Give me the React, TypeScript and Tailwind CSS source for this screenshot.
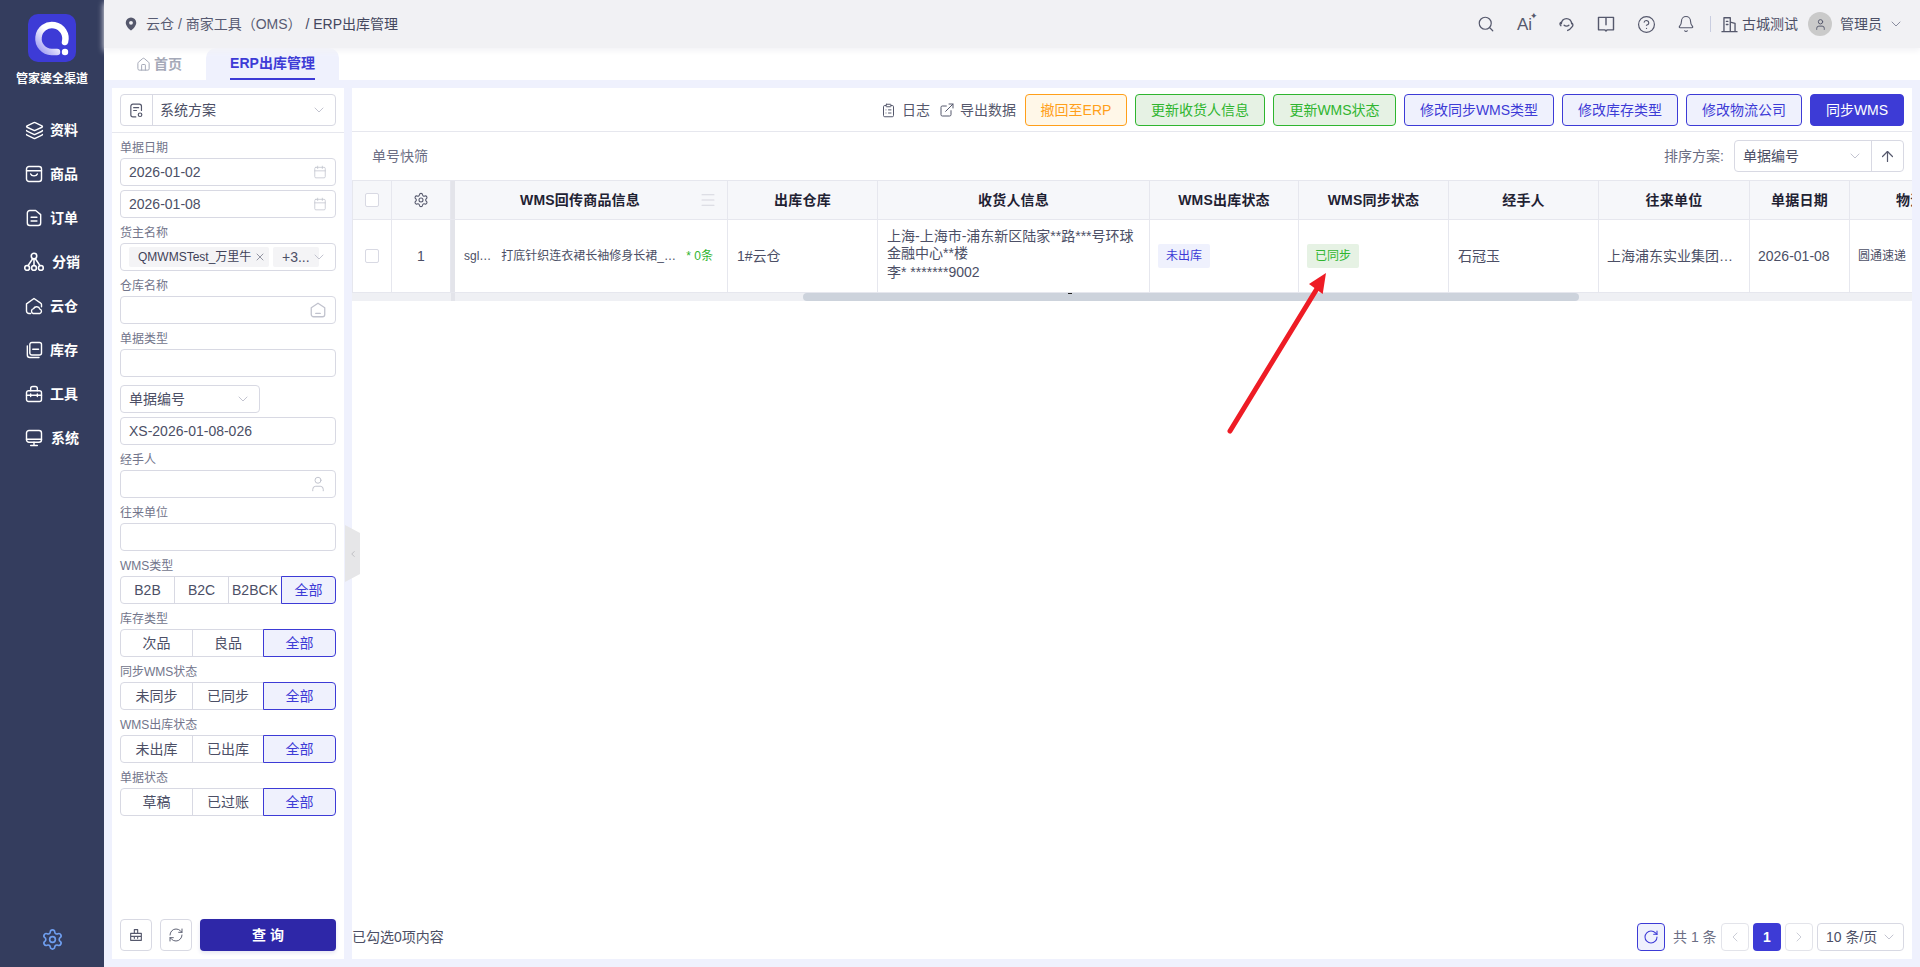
import React from "react";
import { Search, CircleHelp, Bell, ChevronDown, ChevronLeft, ChevronRight, ArrowUp, RotateCw, RefreshCw, Settings, User, Calendar, X, Menu, Home, Layers, ExternalLink, ClipboardList } from "lucide-react";

type IP = { className?: string; children?: React.ReactNode };
const S = ({ className, children }: IP) => (
  <svg viewBox="0 0 24 24" fill="none" stroke="currentColor" strokeWidth={1.7} strokeLinecap="round" strokeLinejoin="round" className={className}>
    {children}
  </svg>
);

const Logo = () => (
  <svg viewBox="0 0 48 48" className="w-12 h-12">
    <defs>
      <linearGradient id="q" x1="0" y1="1" x2="1" y2="0">
        <stop offset="0" stopColor="#9a97f2" />
        <stop offset="0.55" stopColor="#ffffff" />
        <stop offset="1" stopColor="#ffffff" />
      </linearGradient>
    </defs>
    <rect width="48" height="48" rx="10" fill="#3d3bd6" />
    <path d="M37 28 A13.500 13.500 0 1 0 23.500 38 L29 38" fill="none" stroke="url(#q)" strokeWidth="6.500" strokeLinecap="round" />
    <circle cx="37" cy="38" r="3.200" fill="#fff" />
  </svg>
);

const IcoGoods = ({ className }: IP) => (
  <S className={className}>
    <rect x="3" y="3" width="18" height="18" rx="3" />
    <path d="M3 8h18M8 12c1 3 7 3 8 0" />
  </S>
);
const IcoOrder = ({ className }: IP) => (
  <S className={className}>
    <path d="M7 3h7l6 5v10a3 3 0 0 1-3 3H7a3 3 0 0 1-3-3V6a3 3 0 0 1 3-3z" />
    <path d="M8.500 11h7M8.500 15.500h7" />
  </S>
);
const IcoNet = ({ className }: IP) => (
  <S className={className}>
    <circle cx="12" cy="5.500" r="3" />
    <circle cx="4.500" cy="18.500" r="2.600" />
    <circle cx="12" cy="18.500" r="2.600" />
    <circle cx="19.500" cy="18.500" r="2.600" />
    <path d="M10.500 8.500 5.500 16M12 8.500V16M13.500 8.500l5 7.500" />
  </S>
);
const IcoCloud = ({ className }: IP) => (
  <S className={className}>
    <path d="M8 21H6a3 3 0 0 1-3-3V9.500L12 3l8 5.500a2 2 0 0 1 1 2V13" />
    <path d="M11 21a3 3 0 0 1 .5-5.800 4 4 0 0 1 7.500.6A2.700 2.700 0 0 1 19 21z" />
  </S>
);
const IcoStock = ({ className }: IP) => (
  <S className={className}>
    <rect x="7" y="3" width="14" height="15" rx="2.500" />
    <path d="M4 7v11a3 3 0 0 0 3 3h11M10.500 11h7" />
  </S>
);
const IcoTool = ({ className }: IP) => (
  <S className={className}>
    <rect x="3" y="8" width="18" height="13" rx="2.500" />
    <path d="M8 8V5.500A2.500 2.500 0 0 1 10.500 3h3A2.500 2.500 0 0 1 16 5.500V8M3 13.500h18M8 12v3M16 12v3" />
  </S>
);
const IcoMon = ({ className }: IP) => (
  <S className={className}>
    <rect x="3" y="3" width="18" height="14" rx="3" />
    <path d="M3 13.500h18M12 17v3.500M8 21h8" />
  </S>
);

const menus: { label: string; icon: React.ReactNode; txt: string }[] = [
  { label: "资料", icon: <Layers className="w-[19px] h-[19px] shrink-0" strokeWidth={1.8} />, txt: "ml-[8px]" },
  { label: "商品", icon: <IcoGoods className="w-[20px] h-[20px] shrink-0" />, txt: "ml-[8px]" },
  { label: "订单", icon: <IcoOrder className="w-[20px] h-[20px] shrink-0" />, txt: "ml-[8px]" },
  { label: "分销", icon: <IcoNet className="w-[22px] h-[22px] shrink-0" />, txt: "ml-[10px]" },
  { label: "云仓", icon: <IcoCloud className="w-[20px] h-[20px] shrink-0" />, txt: "ml-[8px]" },
  { label: "库存", icon: <IcoStock className="w-[20px] h-[20px] shrink-0" />, txt: "ml-[8px]" },
  { label: "工具", icon: <IcoTool className="w-[20px] h-[20px] shrink-0" />, txt: "ml-[8px]" },
  { label: "系统", icon: <IcoMon className="w-[20px] h-[20px] shrink-0" />, txt: "ml-[9px]" },
];

const Sidebar = () => (
  <aside className="w-[104px] shrink-0 bg-[#343d5e] flex flex-col items-center pt-[14px] pb-[16px] text-white">
    <Logo />
    <div className="mt-[9px] text-[12px] leading-[16px] font-bold text-white">管家婆全渠道</div>
    <nav className="mt-[21px] w-full flex flex-col">
      {menus.map((m) => (
        <div key={m.label} className="h-11 flex items-center pl-[26px]">
          <span className="w-[16px] flex justify-center">{m.icon}</span>
          <span className={`${m.txt} text-[14px] font-bold`}>{m.label}</span>
        </div>
      ))}
    </nav>
    <Settings className="mt-auto w-[23px] h-[23px] text-[#6f9ff0]" strokeWidth={1.7} />
  </aside>
);

const HCell = ({ children }: IP) => <span className="w-10 flex items-center justify-center">{children}</span>;

const TopBar = () => (
  <header className="relative z-10 h-12 shrink-0 bg-[#f1f1f4] shadow-[0_3px_6px_#f3f3f6] flex items-center pl-[20px] pr-[16px] text-[#4c4f66]">
    <svg viewBox="0 0 16 16" className="w-[14px] h-[14px] text-[#55586c]">
      <path fillRule="evenodd" fill="currentColor" d="M8 0.5a6 6 0 0 1 6 6c0 3.600-4 7.500-6 9-2-1.500-6-5.400-6-9a6 6 0 0 1 6-6zm0 4a2.200 2.200 0 1 0 0 4.400a2.200 2.200 0 0 0 0-4.400z" />
    </svg>
    <span className="ml-[8px] text-[14px] whitespace-pre text-[#585b72]">云仓 / 商家工具（OMS） <span className="text-[#44475e]">/ ERP出库管理</span></span>
    <div className="ml-auto flex items-center text-[#55586c]">
      <HCell><Search className="w-[18px] h-[18px]" strokeWidth={1.6} /></HCell>
      <HCell>
        <span className="relative text-[17px] leading-none font-medium w-[18px]">
          Ai<span className="absolute -top-[4px] left-[13px] text-[9px]">✦</span>
        </span>
      </HCell>
      <HCell>
        <S className="w-[19px] h-[19px]">
          <path d="M5.500 11a6.500 6.500 0 0 1 13 0M5.500 9C3.500 9.500 3 12 5 13.500M18.500 10c2 1 2 3.500.5 5-1.500 2-3 3.500-5.500 4.500" />
          <path d="M9 13c1.500 1.500 4.500 1.500 6 0" />
        </S>
      </HCell>
      <HCell>
        <S className="w-[20px] h-[20px]">
          <path d="M3 4h18v15h-7.500L12 20.500 10.500 19H3zM12 4v9" />
        </S>
      </HCell>
      <HCell><CircleHelp className="w-[19px] h-[19px]" strokeWidth={1.5} /></HCell>
      <HCell><Bell className="w-[18px] h-[18px]" strokeWidth={1.5} /></HCell>
      <span className="ml-[4px] h-4 w-px bg-[#c9cde0]" />
      <S className="ml-[9px] w-[19px] h-[19px]">
        <path d="M5 21V3.500h8V21M13 9l6 1.500V21M2.500 21h19M8 8h2M8 12h2" />
      </S>
      <span className="ml-[3px] text-[14px] text-[#4c4f66]">古城测试</span>
      <span className="ml-[10px] w-6 h-6 rounded-full bg-[#cacaca] flex items-center justify-center text-[#55586c]">
        <User className="w-[13px] h-[13px]" strokeWidth={1.8} />
      </span>
      <span className="ml-[8px] text-[14px] text-[#4c4f66]">管理员</span>
      <ChevronDown className="ml-[6px] w-4 h-4 text-[#8a8da0]" strokeWidth={1.5} />
    </div>
  </header>
);

const Tabs = () => (
  <div className="h-8 shrink-0 bg-white flex items-end">
    <div className="w-[102px] h-8 flex items-center pl-[32px] text-[#a5a9b8] text-[14px] font-bold">
      <Home className="w-[15px] h-[15px] mr-[3px]" strokeWidth={1.6} />
      首页
    </div>
    <div className="w-[133px] h-8 rounded-t-[10px] bg-[#eff1fd] flex justify-center">
      <div className="h-8 w-[85px] border-b-2 border-[#3d3bd6] text-[14px] font-bold text-[#3d3bd6] leading-[30px] text-center whitespace-nowrap">ERP出库管理</div>
    </div>
  </div>
);

const box = "h-7 rounded-[4px] border border-[#d8d9e3] bg-white flex items-center text-[14px] text-[#4c4f66]";

const Label = ({ children }: IP) => (
  <div className="h-[25px] pt-[4px] flex items-center text-[12px] text-[#72758b]">{children}</div>
);

const Field = ({ label, value, icon }: { label?: string; value?: string; icon?: React.ReactNode }) => (
  <>
    {label && <Label>{label}</Label>}
    <div className={`${box} pl-[8px] pr-[8px] justify-between`}>
      <span>{value}</span>
      {icon}
    </div>
  </>
);

const Seg = ({ label, items, wide }: { label: string; items: string[]; wide?: boolean }) => (
  <>
    <Label>{label}</Label>
    <div className="h-7 flex text-[14px] text-[#4c4f66]">
      {items.map((t, i) => (
        <div
          key={t}
          className={`${wide ? (i === 2 ? "w-[54px]" : "w-[55px]") : i === 0 ? "w-[73px]" : "w-[72px]"} border border-[#d8d9e3] -mr-px flex items-center justify-center whitespace-nowrap ${i === 0 ? "rounded-l-[4px]" : ""}`}
        >
          {t}
        </div>
      ))}
      <div className={`${wide ? "w-[55px]" : "w-[73px]"} relative border border-[#3d3bd6] rounded-r-[4px] bg-[#eff1fd] text-[#3d3bd6] flex items-center justify-center`}>全部</div>
    </div>
  </>
);

const Left = () => (
  <section className="w-[232px] shrink-0 bg-white flex flex-col">
    <div className="h-[45px] border-b border-[#e6e7ee] px-2 pt-[6px] shrink-0">
      <div className="h-8 rounded-[4px] border border-[#d8d9e3] flex items-center text-[14px] text-[#4c4f66]">
        <span className="w-8 h-full border-r border-[#d8d9e3] flex items-center justify-center text-[#55586c]">
          <S className="w-[17px] h-[17px]">
            <path d="M11 21H7a3 3 0 0 1-3-3V6a3 3 0 0 1 3-3h9a3 3 0 0 1 3 3v6M8 8h7M8 12h4" />
            <circle cx="17" cy="18" r="2.500" />
          </S>
        </span>
        <span className="ml-[7px]">系统方案</span>
        <ChevronDown className="ml-auto mr-[8px] w-4 h-4 text-[#b9bbc8]" strokeWidth={1.3} />
      </div>
    </div>
    <div className="flex-1 flex flex-col px-2 pb-2">
      <Field label="单据日期" value="2026-01-02" icon={<Calendar className="w-[14px] h-[14px] text-[#c0c2cd]" strokeWidth={1.3} />} />
      <div className="h-1 shrink-0" />
      <Field value="2026-01-08" icon={<Calendar className="w-[14px] h-[14px] text-[#c0c2cd]" strokeWidth={1.3} />} />
      <Label>货主名称</Label>
      <div className={`${box} pl-[8px] relative`}>
        <span className="w-[140px] h-5 pl-[9px] bg-[#f4f4f6] rounded-[2px] text-[12px] flex items-center whitespace-nowrap text-[#3f4258]">
          QMWMSTest_万里牛
          <X className="ml-[3px] w-[12px] h-[12px] text-[#6a6d80]" strokeWidth={1.4} />
        </span>
        <span className="ml-[4px] h-5 w-[46px] pl-[9px] bg-[#f4f4f6] rounded-[2px] text-[14px] flex items-center">+3...</span>
        <ChevronDown className="absolute right-[8px] top-[5px] w-4 h-4 text-[#b9bbc8]" strokeWidth={1.3} />
      </div>
      <Field
        label="仓库名称"
        icon={
          <S className="w-[18px] h-[18px] text-[#c0c2cd]">
            <path d="M3 9l9-6 9 6v9a3 3 0 0 1-3 3H6a3 3 0 0 1-3-3zM9 16.500h6" />
          </S>
        }
      />
      <Field label="单据类型" />
      <div className={`${box} mt-2 w-[140px] pl-[8px] pr-[8px] justify-between`}>
        单据编号
        <ChevronDown className="w-4 h-4 text-[#b9bbc8]" strokeWidth={1.3} />
      </div>
      <div className="h-1 shrink-0" />
      <Field value="XS-2026-01-08-026" />
      <Field label="经手人" icon={<User className="w-[18px] h-[18px] text-[#c0c2cd]" strokeWidth={1.3} />} />
      <Field label="往来单位" />
      <Seg label="WMS类型" items={["B2B", "B2C", "B2BCK"]} wide />
      <Seg label="库存类型" items={["次品", "良品"]} />
      <Seg label="同步WMS状态" items={["未同步", "已同步"]} />
      <Seg label="WMS出库状态" items={["未出库", "已出库"]} />
      <Seg label="单据状态" items={["草稿", "已过账"]} />
      <div className="mt-auto flex gap-2">
        <button className="w-8 h-8 rounded-[4px] border border-[#d8d9e3] flex items-center justify-center text-[#55586c]">
          <S className="w-[16px] h-[16px]">
            <path d="M9.500 9V4h5v5M4 9.500h16V20H4zM4 14h16M9.500 14v3M14.500 14v3" />
          </S>
        </button>
        <button className="w-8 h-8 rounded-[4px] border border-[#d8d9e3] flex items-center justify-center text-[#55586c]">
          <RefreshCw className="w-[16px] h-[16px]" strokeWidth={1.4} />
        </button>
        <button className="flex-1 h-8 rounded-[4px] bg-[#2e27a8] text-white text-[14px] font-bold whitespace-pre shadow-[0_2px_4px_#e4e4f2]">查 询</button>
      </div>
    </div>
  </section>
);

const tones = {
  orange: "w-[102px] border-[#ff9f1a] bg-[#fff7e8] text-[#ff9f1a]",
  g1: "w-[130px] border-[#2fb52f] bg-[#e6f2e4] text-[#2fb52f]",
  g2: "w-[123px] border-[#2fb52f] bg-[#e6f2e4] text-[#2fb52f]",
  b1: "w-[150px] border-[#3d3bd6] bg-[#eff1fd] text-[#3d3bd6]",
  b2: "w-[116px] border-[#3d3bd6] bg-[#eff1fd] text-[#3d3bd6]",
  b3: "w-[94px] border-[#3d3bd6] bg-[#3d3bd6] text-white",
};
const Btn = ({ t, tone }: { t: string; tone: keyof typeof tones }) => (
  <button className={`h-8 rounded-[4px] border text-[14px] whitespace-nowrap ${tones[tone]}`}>{t}</button>
);

const Toolbar = () => (
  <div className="h-[44px] shrink-0 border-b border-[#e6e7ee] pt-[6px] pr-2 flex justify-end items-start gap-2">
    <div className="h-8 flex items-center text-[14px] text-[#55586c] mr-[1px]">
      <ClipboardList className="w-[15px] h-[15px]" strokeWidth={1.6} />
      <span className="ml-[6px]">日志</span>
      <ExternalLink className="ml-[9px] w-[16px] h-[16px]" strokeWidth={1.5} />
      <span className="ml-[5px]">导出数据</span>
    </div>
    <Btn t="撤回至ERP" tone="orange" />
    <Btn t="更新收货人信息" tone="g1" />
    <Btn t="更新WMS状态" tone="g2" />
    <Btn t="修改同步WMS类型" tone="b1" />
    <Btn t="修改库存类型" tone="b2" />
    <Btn t="修改物流公司" tone="b2" />
    <Btn t="同步WMS" tone="b3" />
  </div>
);

const SortRow = () => (
  <div className="h-12 shrink-0 flex items-center pl-5 pr-2 text-[14px] text-[#6b6e84]">
    <span>单号快筛</span>
    <span className="ml-auto">排序方案:</span>
    <div className="ml-[10px] w-[170px] h-8 rounded-[4px] border border-[#d8d9e3] flex items-center text-[#4c4f66]">
      <span className="pl-[8px]">单据编号</span>
      <ChevronDown className="ml-auto mr-[8px] w-4 h-4 text-[#b9bbc8]" strokeWidth={1.3} />
      <span className="w-8 h-full border-l border-[#d8d9e3] flex items-center justify-center text-[#55586c]">
        <ArrowUp className="w-[17px] h-[17px]" strokeWidth={1.7} />
      </span>
    </div>
  </div>
);

const heads = [
  { w: "w-[150px]", h: "出库仓库" },
  { w: "w-[272px]", h: "收货人信息" },
  { w: "w-[149px]", h: "WMS出库状态" },
  { w: "w-[150px]", h: "WMS同步状态" },
  { w: "w-[150px]", h: "经手人" },
  { w: "w-[151px]", h: "往来单位" },
  { w: "w-[100px]", h: "单据日期" },
  { w: "w-[150px]", h: "物流公司" },
];
const Check = () => <span className="block w-[14px] h-[14px] rounded-[2px] border border-[#d8d9e3] bg-white" />;
const th = "shrink-0 h-full border-r border-[#e6e7ee] flex items-center justify-center text-[14px] font-bold text-[#1f2233] tracking-[0.2px] whitespace-nowrap";
const td = "shrink-0 h-full border-r border-[#e6e7ee] flex items-center text-[#4c4f66]";

const DataTable = () => (
  <div className="overflow-hidden shrink-0">
    <div className="w-[1700px] h-[40px] flex bg-[#f6f7fa] border-t border-b border-[#e6e7ee]">
      <div className={`${th} w-[40px] border-l`}><Check /></div>
      <div className={`${th} w-[59px]`}><Settings className="w-[16px] h-[16px] text-[#55586c]" strokeWidth={1.6} /></div>
      <div className={`${th} w-[277px] border-l-4 border-l-[#e3e4ea] pr-[22px] relative`}>
        WMS回传商品信息
        <Menu className="absolute right-[10px] top-[10px] w-[18px] h-[18px] text-[#d5d6de]" strokeWidth={1.4} />
      </div>
      {heads.map((c) => (
        <div key={c.h} className={`${th} ${c.w}`}>{c.h}</div>
      ))}
    </div>
    <div className="w-[1700px] h-[73px] flex bg-white border-b border-[#e6e7ee]">
      <div className={`${td} w-[40px] border-l justify-center`}><Check /></div>
      <div className={`${td} w-[59px] justify-center text-[14px]`}>1</div>
      <div className={`${td} w-[277px] border-l-4 border-l-[#e3e4ea] pl-[9px] pr-[14px] text-[12px] whitespace-nowrap`}>
        <span>sgl…</span>
        <span className="ml-[10px]">打底针织连衣裙长袖修身长裙_…</span>
        <span className="ml-auto text-[#2fb52f]">* 0条</span>
      </div>
      <div className={`${td} w-[150px] px-[9px] text-[14px]`}>1#云仓</div>
      <div className={`${td} w-[272px] px-[9px] pb-[4px] text-[14px] leading-[17px]`}>
        <div>
          上海-上海市-浦东新区陆家**路***号环球金融中心**楼
          <div className="mt-[2px]">李* *******9002</div>
        </div>
      </div>
      <div className={`${td} w-[149px] px-[8px]`}>
        <span className="flex w-[52px] h-6 rounded-[2px] bg-[#eff1fd] text-[#3d3bd6] text-[12px] items-center justify-center">未出库</span>
      </div>
      <div className={`${td} w-[150px] px-[8px]`}>
        <span className="flex w-[52px] h-6 rounded-[2px] bg-[#e6f2e4] text-[#2fb52f] text-[12px] items-center justify-center">已同步</span>
      </div>
      <div className={`${td} w-[150px] px-[9px] text-[14px]`}>石冠玉</div>
      <div className={`${td} w-[151px] px-[8px] text-[14px] whitespace-nowrap`}>上海浦东实业集团…</div>
      <div className={`${td} w-[100px] px-[8px] text-[14px]`}>2026-01-08</div>
      <div className={`${td} w-[150px] px-[8px] text-[12px]`}>圆通速递</div>
    </div>
    <div className="relative h-[8px] bg-[#eff0f4] flex">
      <span className="ml-[99px] w-[4px] bg-[#e3e4ea]" />
      <span className="ml-[348px] w-[776px] rounded-full bg-[#cdd3dc]" />
      <span className="absolute left-[716px] top-0 w-[4px] h-px bg-[#222]" />
    </div>
  </div>
);

const pageBox = "w-7 h-7 rounded-[4px] border border-[#e3e4ea] flex items-center justify-center text-[#c4c6d1]";
const Footer = () => (
  <div className="mt-auto h-[36px] shrink-0 flex items-start pr-2 text-[14px] text-[#4c4f66]">
    <span className="leading-7">已勾选0项内容</span>
    <div className="ml-auto flex items-center">
      <span className="w-7 h-7 rounded-[4px] border border-[#3d3bd6] bg-[#eff1fd] text-[#3d3bd6] flex items-center justify-center">
        <RotateCw className="w-4 h-4" strokeWidth={1.6} />
      </span>
      <span className="ml-2 w-[44px] text-[#6b6e84] whitespace-nowrap">共 1 条</span>
      <span className={`ml-1 ${pageBox}`}><ChevronLeft className="w-4 h-4" strokeWidth={1.3} /></span>
      <span className="ml-1 w-7 h-7 rounded-[4px] bg-[#3d3bd6] text-white font-bold flex items-center justify-center">1</span>
      <span className={`ml-1 ${pageBox}`}><ChevronRight className="w-4 h-4" strokeWidth={1.3} /></span>
      <span className="ml-1 w-[87px] h-7 rounded-[4px] border border-[#d8d9e3] flex items-center pl-[8px] whitespace-nowrap">
        10 条/页
        <ChevronDown className="ml-auto mr-[6px] w-4 h-4 text-[#b9bbc8]" strokeWidth={1.3} />
      </span>
    </div>
  </div>
);

export default function App() {
  return (
    <div className="relative flex h-[967px] w-full overflow-hidden bg-[#eff1fd] font-['Liberation_Sans','Noto_Sans_CJK_SC',sans-serif]">
      <Sidebar />
      <main className="flex-1 min-w-0 flex flex-col">
        <TopBar />
        <Tabs />
        <div className="flex-1 min-h-0 flex gap-2 p-2">
          <Left />
          <section className="flex-1 min-w-0 bg-white flex flex-col">
            <Toolbar />
            <SortRow />
            <DataTable />
            <Footer />
          </section>
        </div>
      </main>
      <div className="absolute left-[345px] top-[525px] w-[15px] h-[57px] bg-[#e6e6e8] [clip-path:polygon(0_0,100%_14%,100%_86%,0_100%)] flex items-center justify-center text-[#a8a8ae]">
        <ChevronLeft className="w-[10px] h-[10px]" strokeWidth={1.5} />
      </div>
      <svg className="absolute left-[1220px] top-[265px] w-[120px] h-[180px] pointer-events-none" viewBox="0 0 120 180">
        <path d="M10 166 L98 22" stroke="#ee1c25" strokeWidth="5" strokeLinecap="round" fill="none" />
        <polygon points="106,8 89,19 102.700,29" fill="#ee1c25" />
      </svg>
    </div>
  );
}
